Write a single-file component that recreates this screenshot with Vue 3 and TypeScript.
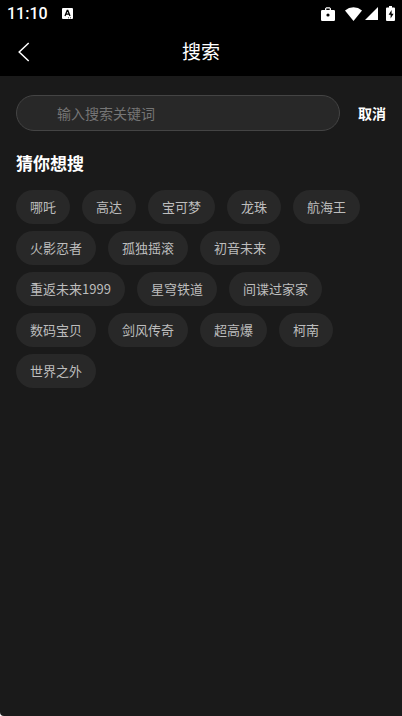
<script setup lang="ts">
import { ref } from 'vue'

const keyword = ref<string>('')
const suggestions: string[] = [
  '哪吒', '高达', '宝可梦', '龙珠', '航海王',
  '火影忍者', '孤独摇滚', '初音未来',
  '重返未来1999', '星穹铁道', '间谍过家家',
  '数码宝贝', '剑风传奇', '超高爆', '柯南',
  '世界之外',
]

function pick(word: string): void {
  keyword.value = word
}
</script>

<template>
  <div class="screen">
    <header class="top">
      <div class="status">
        <div class="status-side">
          <time class="clock">11:10</time>
          <svg class="ime" viewBox="0 0 11 11" width="11" height="11" aria-hidden="true">
            <rect width="11" height="11" rx="1" fill="#fff" />
            <path d="M3 8 5.2 2.5h.6L8 8M3.8 6.2h3.4" fill="none" stroke="#000" stroke-width="1.3" />
            <path d="M6 9.8h1M8 9.8h1" stroke="#000" stroke-width=".8" />
          </svg>
        </div>
        <div class="status-side">
          <svg class="bag" viewBox="0 0 14 14" width="14" height="14" aria-hidden="true">
            <path d="M1.2 3H4V1.600L5.300.3h3.400L10 1.600V3h2.800q1.200 0 1.200 1.200v8.500q0 1.300-1.200 1.300H1.200Q0 14 0 12.700V4.200Q0 3 1.200 3ZM5.300 3h3.400V1.600H5.300Z" fill="#fff" fill-rule="evenodd" />
            <circle cx="7" cy="8" r="1.600" fill="#000" />
          </svg>
          <svg class="wifi" viewBox="0 0 17 14" width="17" height="14" aria-hidden="true">
            <path d="M0 3.400Q3.700.3 8.500.3T17 3.400L8.500 14Z" fill="#fff" />
          </svg>
          <svg class="signal" viewBox="0 0 13 13" width="13" height="13" aria-hidden="true">
            <path d="M13 0v13H0Z" fill="#fff" />
          </svg>
          <svg class="battery" viewBox="0 0 9 15" width="9" height="15" aria-hidden="true">
            <path d="M1 1.600h2V0h3v1.600h2q1 0 1 1V14q0 1-1 1H1q-1 0-1-1V2.600q0-1 1-1Z" fill="#fff" />
            <path d="M5.600 4 2.600 8.700h2v3.800l3-4.700h-2Z" fill="#000" />
          </svg>
        </div>
      </div>
      <div class="nav">
        <button class="back" type="button" aria-label="返回">
          <svg viewBox="0 0 12 20" width="12" height="20" aria-hidden="true">
            <path d="M10.700 1 1.200 10l9.500 9" fill="none" stroke="#fff" stroke-width="1.500" />
          </svg>
        </button>
        <h1 class="title">搜索</h1>
      </div>
    </header>

    <main class="content">
      <form class="search" @submit.prevent>
        <input v-model="keyword" class="field" type="text" placeholder="输入搜索关键词" aria-label="输入搜索关键词" />
        <button class="cancel" type="button" @click="keyword = ''">取消</button>
      </form>
      <h2 class="heading">猜你想搜</h2>
      <ul class="chips">
        <li v-for="word in suggestions" :key="word">
          <button class="chip" type="button" @click="pick(word)">{{ word }}</button>
        </li>
      </ul>
    </main>
  </div>
</template>

<style>
body {
  background: #fff;
}
</style>

<style scoped>
.screen {
  min-height: 100vh;
  border-bottom-left-radius: 4px;
  background: #1a1a1a;
  color: #fff;
  font-family: "Noto Sans CJK SC", sans-serif;
}

button,
input {
  margin: 0;
  padding: 0;
  border: 0;
  background: none;
  color: inherit;
  font-family: inherit;
}

button {
  cursor: pointer;
}

svg {
  display: block;
}

.top {
  background: #000;
}

.status {
  display: flex;
  justify-content: space-between;
  height: 27px;
  padding: 0 7px;
}

.status-side {
  display: flex;
  align-items: center;
}

.clock {
  margin-right: 14px;
  font: 500 16px/28px Roboto, sans-serif;
}

.bag {
  margin-right: 10px;
}

.wifi {
  margin-right: 3px;
}

.signal {
  margin-right: 8px;
}

.nav {
  display: grid;
  grid-template-columns: 48px 1fr 48px;
  align-items: center;
  height: 49px;
}

.back {
  display: flex;
  align-items: center;
  height: 48px;
  padding-left: 18px;
}

.title {
  margin: 0;
  padding-bottom: 2px;
  font-size: 19px;
  font-weight: 400;
  line-height: 28px;
  text-align: center;
}

.content {
  padding: 19px 16px;
}

.search {
  display: flex;
  align-items: center;
  gap: 18px;
}

.field {
  flex: 1;
  min-width: 0;
  box-sizing: border-box;
  height: 36px;
  padding: 0 40px;
  border: 1px solid #444;
  border-radius: 18px;
  background: #282828;
  font-size: 14px;
  outline: none;
}

.field::placeholder {
  color: #757575;
  opacity: 1;
}

.cancel {
  font-size: 14px;
  font-weight: 700;
  line-height: 36px;
}

.heading {
  margin: 19px 0 15px;
  font-size: 17px;
  font-weight: 700;
  line-height: 25px;
}

.chips {
  display: flex;
  flex-wrap: wrap;
  gap: 7px 12px;
  margin: 0;
  padding: 0;
  list-style: none;
}

.chip {
  display: block;
  height: 34px;
  padding: 0 14px;
  border-radius: 17px;
  background: #282828;
  color: #bdbdbd;
  font-size: 13px;
  line-height: 34px;
}
</style>
